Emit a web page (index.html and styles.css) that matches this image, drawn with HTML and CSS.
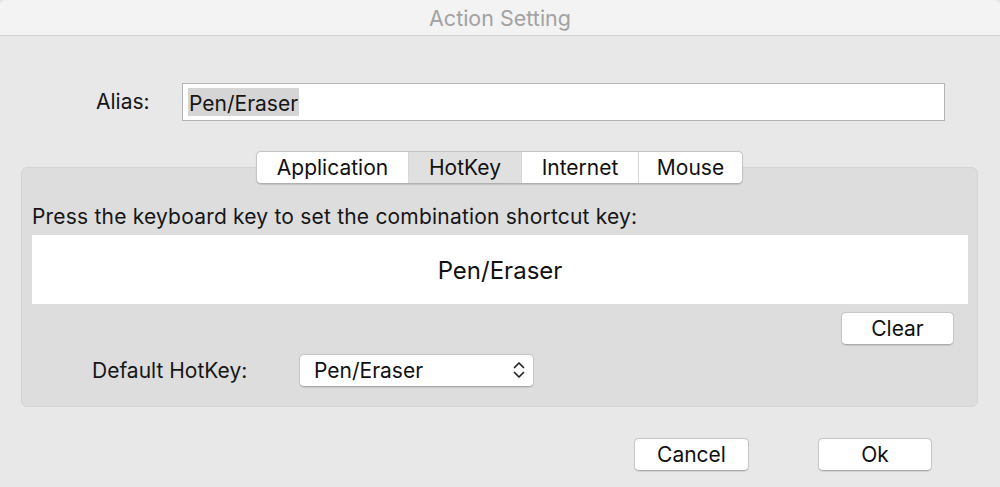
FILE: index.html
```html
<!DOCTYPE html>
<html>
<head>
<meta charset="utf-8">
<link rel="stylesheet" href="styles.css">
</head>
<body>
<div class="window">
  <div class="titlebar">Action Setting</div>
  <div class="alias-row">
    <span class="alias-label">Alias:</span>
    <div class="text-input"><span class="selected">Pen/Eraser</span></div>
  </div>
  <div class="group">
    <div class="tabs">
      <div class="tab tab-app">Application</div>
      <div class="tab tab-hot active">HotKey</div>
      <div class="tab tab-int">Internet</div>
      <div class="tab tab-mouse">Mouse</div>
    </div>
    <div class="hint">Press the keyboard key to set the combination shortcut key:</div>
    <div class="key-box">Pen/Eraser</div>
    <div class="clear-row"><div class="btn btn-clear">Clear</div></div>
    <div class="default-row">
      <span class="default-label">Default HotKey:</span>
      <div class="select">
        <span>Pen/Eraser</span>
        <svg class="chev" width="14" height="22" viewBox="0 0 14 22"><path d="M2.5 8.5 L7 4 L11.5 8.5 M2.5 13.5 L7 18 L11.5 13.5" fill="none" stroke="#222" stroke-width="1.7" stroke-linecap="round" stroke-linejoin="round"/></svg>
      </div>
    </div>
  </div>
  <div class="footer">
    <div class="btn btn-cancel">Cancel</div>
    <div class="btn btn-ok">Ok</div>
  </div>
</div>
</body>
</html>
```

FILE: styles.css
```css
html, body {
  margin: 0;
  padding: 0;
  background: #e8e8e8;
}
body {
  font-family: Inter, "Liberation Sans", Arial, sans-serif;
  color: #161616;
  width: 1000px;
  height: 487px;
  overflow: hidden;
}
.window {
  width: 1000px;
  height: 487px;
  background: #e8e8e8;
  border-radius: 6px 6px 0 0;
  overflow: hidden;
}
.titlebar {
  height: 35px;
  background: #f3f3f3;
  border-bottom: 1px solid #d2d2d2;
  color: #a2a2a2;
  font-size: 21.5px;
  line-height: 37px;
  text-align: center;
}
.alias-row {
  display: flex;
  align-items: center;
  margin-top: 47px;
  height: 38px;
}
.alias-label {
  width: 182px;
  padding-left: 96px;
  box-sizing: border-box;
  font-size: 21px;
  line-height: 42px;
}
.text-input {
  width: 763px;
  height: 38px;
  box-sizing: border-box;
  background: #fff;
  border: 1px solid #b4b4b4;
  padding: 4px 5px;
  display: flex;
  align-items: stretch;
}
.selected {
  background: #d5d5d5;
  font-size: 21px;
  line-height: 31px;
  padding: 0 1px;
}
.group {
  margin: 46px 0 0 21px;
  width: 957px;
  height: 240px;
  box-sizing: border-box;
  background: #dddddd;
  border: 1px solid #d4d4d4;
  border-radius: 6px;
  padding: 0 9px 0 10px;
}
.tabs {
  display: flex;
  margin: -17px 0 0 224px;
  width: 487px;
  height: 33px;
  box-sizing: border-box;
  background: #fff;
  border: 1px solid #c4c4c4;
  border-bottom-color: #b0b0b0;
  border-radius: 5px;
  overflow: hidden;
  box-shadow: 0 0.5px 1px rgba(0,0,0,0.12);
}
.tab {
  font-size: 21px;
  line-height: 31px;
  text-align: center;
  border-right: 1px solid #d6d6d6;
  color: #111;
}
.tab:last-child { border-right: none; }
.tab-app { width: 151px; }
.tab-hot { width: 112px; }
.tab-int { width: 116px; }
.tab-mouse { flex: 1; }
.tab.active { background: #e0e0e0; }
.hint {
  font-size: 21px;
  letter-spacing: 0.2px;
  margin-top: 16px;
  height: 35px;
  line-height: 33px;
}
.key-box {
  background: #fff;
  height: 69px;
  line-height: 72px;
  text-align: center;
  font-size: 24px;
  color: #111;
}
.clear-row {
  display: flex;
  justify-content: flex-end;
  padding-right: 14px;
  margin-top: 8px;
}
.btn {
  background: #fff;
  border: 1px solid #c6c6c6;
  border-bottom-color: #acacac;
  border-radius: 5px;
  box-sizing: border-box;
  height: 33px;
  font-size: 21px;
  line-height: 31px;
  text-align: center;
  color: #111;
  box-shadow: 0 0.5px 1px rgba(0,0,0,0.1);
}
.btn-clear { width: 113px; }
.default-row {
  display: flex;
  align-items: center;
  margin-top: 8px;
  height: 34px;
}
.default-label {
  font-size: 21px;
  padding-left: 60px;
  width: 267px;
  box-sizing: border-box;
}
.select {
  width: 235px;
  height: 33px;
  box-sizing: border-box;
  background: #fff;
  border: 1px solid #c6c6c6;
  border-bottom-color: #acacac;
  border-radius: 5px;
  display: flex;
  align-items: center;
  justify-content: space-between;
  padding: 0 7px 0 14px;
  font-size: 21px;
  color: #111;
  box-shadow: 0 0.5px 1px rgba(0,0,0,0.1);
}
.chev { display: block; }
.footer {
  display: flex;
  margin-top: 31px;
  padding-left: 634px;
  gap: 69px;
}
.btn-cancel { width: 115px; }
.btn-ok { width: 114px; }
```
